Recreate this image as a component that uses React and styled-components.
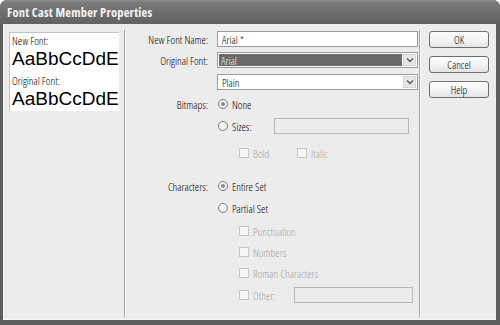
import React from "react";
import styled, { createGlobalStyle } from "styled-components";

const Global = createGlobalStyle`
  html, body { margin: 0; padding: 0; background: #ffffff; }
  body {
    font-family: "Open Sans", "Liberation Sans", Arial, sans-serif;
    font-stretch: 79%;
    font-weight: 350;
    font-size: 11px;
    color: #000;
  }
  * { box-sizing: border-box; }
`;

const Window = styled.div`
  width: 500px;
  height: 325px;
  display: flex;
  flex-direction: column;
  background: #5e5e5e;
  border-radius: 7px 7px 0 0;
  overflow: hidden;
`;

const TitleBar = styled.div`
  height: 24px;
  flex: none;
  display: flex;
  align-items: center;
  padding-left: 7px;
  background: linear-gradient(#8e8e8e 0px, #7a7a7a 3px, #6c6c6c 14px, #626262 24px);
  color: #f4f4f4;
  font-weight: 700;
  font-size: 12.5px;
  letter-spacing: 0.2px;
`;

const Body = styled.div`
  flex: 1;
  margin: 0 4px 5px 3px;
  background: #ececec;
  border-left: 1px solid #f8f8f8;
  border-bottom: 1px solid #f8f8f8;
  display: flex;
`;

const LeftPane = styled.div`
  width: 120px;
  flex: none;
  padding: 8px 0 0 5px;
`;

const Preview = styled.div`
  width: 110px;
  height: 79px;
  background: #ffffff;
  border-top: 1px solid #c4c4c4;
  border-left: 1px solid #c4c4c4;
  padding: 2px 0 0 2px;
  overflow: hidden;
  white-space: nowrap;
`;

const PreviewLabel = styled.div`
  line-height: 12px;
  margin-top: ${(p) => p.$mt || 0}px;
`;

const Sample = styled.div`
  font-family: "Liberation Sans", Arial, sans-serif;
  font-stretch: normal;
  font-weight: 400;
  font-size: 19px;
  line-height: 24px;
`;

const Separator = styled.div`
  width: 2px;
  flex: none;
  margin: 6px 0 2px 0;
  border-left: 1px solid #a6a6a6;
  border-right: 1px solid #fafafa;
`;

const Middle = styled.div`
  width: 293px;
  flex: none;
  padding-top: 7px;
  display: flex;
  flex-direction: column;
`;

const Row = styled.div`
  display: flex;
  align-items: center;
  height: 16px;
  margin-top: ${(p) => p.$mt || 0}px;
`;

const Label = styled.span`
  width: 82px;
  flex: none;
  margin-right: 9px;
  text-align: right;
  white-space: nowrap;
`;

const TextBox = styled.div`
  width: ${(p) => p.$w}px;
  height: 16px;
  border: 1px solid ${(p) => (p.$disabled ? "#b8b8b8" : "#9c9c9c")};
  background: ${(p) => (p.$disabled ? "#ececec" : "#ffffff")};
  padding-left: 4px;
  display: flex;
  align-items: center;
  flex: none;
`;

const SelectBox = styled.div`
  width: 201px;
  height: 16px;
  border: 1px solid #9c9c9c;
  background: #ffffff;
  display: flex;
  align-items: stretch;
  padding: 1px;
`;

const SelectValue = styled.div`
  flex: 1;
  display: flex;
  align-items: center;
  padding-left: ${(p) => (p.$selected ? 2 : 3)}px;
  margin-right: 1px;
  background: ${(p) => (p.$selected ? "#6a6a6a" : "transparent")};
  color: ${(p) => (p.$selected ? "#f2f2f2" : "#000")};
`;

const ArrowBtn = styled.div`
  width: 13px;
  flex: none;
  background: #e6e6e6;
  border: 1px solid #d6d6d6;
  display: flex;
  align-items: center;
  justify-content: center;
`;

const Option = styled.div`
  display: flex;
  align-items: center;
  width: ${(p) => (p.$w ? `${p.$w}px` : "auto")};
  margin-left: ${(p) => p.$indent || 0}px;
  flex: none;
  color: ${(p) => (p.$disabled ? "#a6a6a6" : "#000")};
  white-space: nowrap;
`;

const RadioCircle = styled.span`
  width: 10px;
  height: 10px;
  border-radius: 50%;
  border: 1px solid #7c7c7c;
  background: radial-gradient(circle at 40% 40%, #ffffff, #e4e4e4);
  margin: 0 4px 0 1px;
  display: flex;
  align-items: center;
  justify-content: center;
  flex: none;
  &::after {
    content: "";
    width: 4px;
    height: 4px;
    border-radius: 50%;
    background: ${(p) => (p.$checked ? "#8a8a8a" : "transparent")};
  }
`;

const CheckBox = styled.span`
  width: 10px;
  height: 10px;
  border: 1px solid #c6c6c6;
  background: #f6f6f6;
  margin-right: 4px;
  flex: none;
`;

const Buttons = styled.div`
  flex: 1;
  padding: 7px 0 0 8px;
  display: flex;
  flex-direction: column;
  gap: 8px;
`;

const Button = styled.div`
  width: 60px;
  height: 17px;
  border: 1px solid #6e6e6e;
  border-radius: 3px;
  background: linear-gradient(#fdfdfd, #f2f2f2 60%, #e2e2e2);
  display: flex;
  align-items: center;
  justify-content: center;
`;

const Chevron = () => (
  <svg width="8" height="6" viewBox="0 0 8 6">
    <path d="M1 1.5 L4 4.5 L7 1.5" fill="none" stroke="#5a5a5a" strokeWidth="1.4" />
  </svg>
);

const Radio = ({ checked, children, w }) => (
  <Option $w={w}>
    <RadioCircle $checked={checked} />
    {children}
  </Option>
);

const Check = ({ children, w, indent }) => (
  <Option $w={w} $indent={indent} $disabled>
    <CheckBox />
    {children}
  </Option>
);

export default function App() {
  return (
    <>
      <Global />
      <Window>
        <TitleBar>Font Cast Member Properties</TitleBar>
        <Body>
          <LeftPane>
            <Preview>
              <PreviewLabel>New Font:</PreviewLabel>
              <Sample>AaBbCcDdE</Sample>
              <PreviewLabel $mt={4}>Original Font:</PreviewLabel>
              <Sample>AaBbCcDdE</Sample>
            </Preview>
          </LeftPane>
          <Separator />
          <Middle>
            <Row>
              <Label>New Font Name:</Label>
              <TextBox $w={201}>Arial *</TextBox>
            </Row>
            <Row $mt={5}>
              <Label>Original Font:</Label>
              <SelectBox>
                <SelectValue $selected>Arial</SelectValue>
                <ArrowBtn>
                  <Chevron />
                </ArrowBtn>
              </SelectBox>
            </Row>
            <Row $mt={6}>
              <Label />
              <SelectBox>
                <SelectValue>Plain</SelectValue>
                <ArrowBtn>
                  <Chevron />
                </ArrowBtn>
              </SelectBox>
            </Row>
            <Row $mt={6}>
              <Label>Bitmaps:</Label>
              <Radio checked>None</Radio>
            </Row>
            <Row $mt={6}>
              <Label />
              <Radio w={57}>Sizes:</Radio>
              <TextBox $w={135} $disabled />
            </Row>
            <Row $mt={11}>
              <Label />
              <Check indent={22} w={58}>Bold</Check>
              <Check>Italic</Check>
            </Row>
            <Row $mt={17}>
              <Label>Characters:</Label>
              <Radio checked>Entire Set</Radio>
            </Row>
            <Row $mt={6}>
              <Label />
              <Radio>Partial Set</Radio>
            </Row>
            <Row $mt={7}>
              <Label />
              <Check indent={22}>Punctuation</Check>
            </Row>
            <Row $mt={5}>
              <Label />
              <Check indent={22}>Numbers</Check>
            </Row>
            <Row $mt={5}>
              <Label />
              <Check indent={22}>Roman Characters</Check>
            </Row>
            <Row $mt={6}>
              <Label />
              <Check indent={22} w={55}>Other:</Check>
              <TextBox $w={119} $disabled />
            </Row>
          </Middle>
          <Separator />
          <Buttons>
            <Button>OK</Button>
            <Button>Cancel</Button>
            <Button>Help</Button>
          </Buttons>
        </Body>
      </Window>
    </>
  );
}
